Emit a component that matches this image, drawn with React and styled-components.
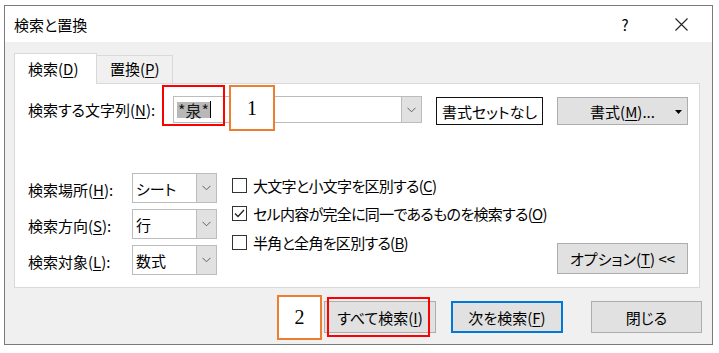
import React from 'react'
import styled, { createGlobalStyle } from 'styled-components'

const GlobalStyle = createGlobalStyle`
  html, body {
    margin: 0;
    padding: 0;
    background: #fff;
  }
  body {
    font-family: "Noto Sans CJK JP", "Noto Sans", sans-serif;
    font-size: 15px;
    color: #000;
    font-feature-settings: "palt";
  }
  * { box-sizing: border-box; }
  u { text-underline-offset: 2px; text-decoration-thickness: 1px; }
`

function Chevron() {
  return (
    <svg width="9" height="6" viewBox="0 0 9 6">
      <path d="M0.5 0.8 L4.5 4.8 L8.5 0.8" fill="none" stroke="#606060" strokeWidth="1" />
    </svg>
  )
}

function Combo({ children, width }) {
  return (
    <ComboBox $width={width}>
      <ComboText>{children}</ComboText>
      <ComboButton>
        <Chevron />
      </ComboButton>
    </ComboBox>
  )
}

function Check({ checked, children }) {
  return (
    <CheckRow>
      <CheckBox>
        {checked && (
          <svg width="13" height="13" viewBox="0 0 13 13">
            <path d="M2 6.5 L5 9.5 L11 3" fill="none" stroke="#222" strokeWidth="1.3" />
          </svg>
        )}
      </CheckBox>
      <span>{children}</span>
    </CheckRow>
  )
}

export default function App() {
  return (
    <Page>
      <GlobalStyle />
      <Dialog>
        <TitleBar>
          <Title>検索と置換</Title>
          <Caption>?</Caption>
          <Caption $close>
            <svg width="13" height="13" viewBox="0 0 13 13">
              <path d="M0.5 0.5 L12.5 12.5 M12.5 0.5 L0.5 12.5" stroke="#222" strokeWidth="1.1" />
            </svg>
          </Caption>
        </TitleBar>

        <Content>
          <Tabs>
            <Tab $active>検索(<u>D</u>)</Tab>
            <Tab>置換(<u>P</u>)</Tab>
          </Tabs>
          <Panel>
            <FindRow>
              <FindLabel>検索する文字列(<u>N</u>):</FindLabel>
              <ComboBox $width={249}>
                <ComboText>
                  <Selected>*泉*</Selected>
                  <Caret />
                </ComboText>
                <ComboButton>
                  <Chevron />
                </ComboButton>
              </ComboBox>
              <FormatNone>書式セットなし</FormatNone>
              <Button $width={131} $ml={14} $h={28}>
                書式(<u>M</u>)...
                <DropArrow width="7" height="4" viewBox="0 0 7 4">
                  <path d="M0 0 H7 L3.5 4 Z" fill="#000" />
                </DropArrow>
              </Button>
            </FindRow>

            <OptionsRow>
              <Fields>
                <FieldLabel>検索場所(<u>H</u>):</FieldLabel>
                <Combo>シート</Combo>
                <FieldLabel>検索方向(<u>S</u>):</FieldLabel>
                <Combo>行</Combo>
                <FieldLabel>検索対象(<u>L</u>):</FieldLabel>
                <Combo>数式</Combo>
              </Fields>
              <Checks>
                <Check>大文字と小文字を区別する(<u>C</u>)</Check>
                <Check checked>セル内容が完全に同一であるものを検索する(<u>O</u>)</Check>
                <Check>半角と全角を区別する(<u>B</u>)</Check>
              </Checks>
              <OptionButton>オプション(<u>T</u>) &lt;&lt;</OptionButton>
            </OptionsRow>
          </Panel>
        </Content>

        <Footer>
          <Button $width={112} $h={32}>すべて検索(<u>I</u>)</Button>
          <Button $width={112} $h={32} $ml={15} $focus>次を検索(<u>F</u>)</Button>
          <Button $width={111} $h={32} $ml={28}>閉じる</Button>
        </Footer>
      </Dialog>

      <RedMark $x={162} $y={85} $w={63} $h={41} />
      <NumberMark $x={229} $y={85} $w={46} $h={46}>1</NumberMark>
      <NumberMark $x={277} $y={295} $w={45} $h={45}>2</NumberMark>
      <RedMark $x={327} $y={297} $w={103} $h={40} />
    </Page>
  )
}

const Page = styled.div`
  position: relative;
  width: 719px;
  height: 353px;
  padding: 5px 0 0 4px;
`

const Dialog = styled.div`
  width: 709px;
  height: 340px;
  border: 1px solid #7a7a7a;
  background: #f0f0f0;
  display: flex;
  flex-direction: column;
`

const TitleBar = styled.div`
  height: 36px;
  background: #fff;
  display: flex;
  align-items: center;
  padding: 0 16px 0 9px;
`

const Title = styled.div`
  flex: 1;
  line-height: 1;
`

const Caption = styled.div`
  width: 30px;
  display: flex;
  justify-content: center;
  align-items: center;
  margin-left: ${(p) => (p.$close ? '26px' : '0')};
  font-size: 15px;
`

const Content = styled.div`
  padding: 11px 12px 0 9px;
`

const Tabs = styled.div`
  display: flex;
  align-items: flex-end;
  height: 30px;
`

const Tab = styled.div`
  height: ${(p) => (p.$active ? '31px' : '28px')};
  width: ${(p) => (p.$active ? '83px' : '76px')};
  padding: ${(p) => (p.$active ? '3px' : '1px')} 0 0 13px;
  background: ${(p) => (p.$active ? '#fff' : '#f0f0f0')};
  border: 1px solid #d9d9d9;
  border-bottom: none;
  border-left: ${(p) => (p.$active ? '1px solid #d9d9d9' : 'none')};
  margin-bottom: ${(p) => (p.$active ? '-1px' : '0')};
  position: relative;
  z-index: 1;
  line-height: 24px;
`

const Panel = styled.div`
  height: 205px;
  background: #fff;
  border: 1px solid #d9d9d9;
  padding: 12px 11px 12px 13px;
  display: flex;
  flex-direction: column;
  justify-content: space-between;
`

const FindRow = styled.div`
  display: flex;
  align-items: flex-start;
`

const FindLabel = styled.div`
  width: 145px;
  line-height: 27px;
`

const ComboBox = styled.div`
  width: ${(p) => p.$width || 85}px;
  height: ${(p) => (p.$width ? 27 : 30)}px;
  border: 1px solid #bcbcbc;
  background: #fff;
  display: flex;
  flex-shrink: 0;
`

const ComboText = styled.div`
  flex: 1;
  display: flex;
  align-items: center;
  padding-left: 3px;
`

const ComboButton = styled.div`
  width: 20px;
  background: #e1e1e1;
  border-left: 1px solid #bcbcbc;
  display: flex;
  align-items: center;
  justify-content: center;
`

const Selected = styled.span`
  background: #b8b8b8;
  line-height: 16px;
  padding: 0 1px;
  color: #1a1a1a;
  font-size: 16px;
`

const Caret = styled.span`
  width: 1px;
  height: 17px;
  background: #000;
`

const FormatNone = styled.div`
  width: 107px;
  height: 28px;
  margin: 1px 0 0 14px;
  border: 1px solid #111;
  background: #fff;
  display: flex;
  align-items: center;
  justify-content: center;
  flex-shrink: 0;
`

const Button = styled.div`
  position: relative;
  width: ${(p) => p.$width}px;
  height: ${(p) => p.$h}px;
  margin-left: ${(p) => p.$ml || 0}px;
  margin-top: ${(p) => (p.$h === 28 ? 1 : 0)}px;
  background: #e1e1e1;
  border: ${(p) => (p.$focus ? '2px solid #0078d7' : '1px solid #adadad')};
  display: flex;
  align-items: center;
  justify-content: center;
  flex-shrink: 0;
`

const DropArrow = styled.svg`
  position: absolute;
  right: 5px;
  top: 12px;
`

const OptionsRow = styled.div`
  display: flex;
  align-items: flex-start;
`

const Fields = styled.div`
  display: grid;
  grid-template-columns: 104px 85px;
  grid-auto-rows: 30px;
  row-gap: 6px;
  flex-shrink: 0;
`

const FieldLabel = styled.div`
  display: flex;
  align-items: center;
  padding-top: 2px;
`

const Checks = styled.div`
  margin: -2px 0 0 15px;
  display: flex;
  flex-direction: column;
  flex: 1;
  min-width: 0;
  white-space: nowrap;
  letter-spacing: -0.7px;
`

const CheckRow = styled.div`
  height: 28.5px;
  display: flex;
  align-items: center;
  gap: 6px;
`

const CheckBox = styled.div`
  width: 15px;
  height: 15px;
  border: 1px solid #333;
  display: flex;
  align-items: center;
  justify-content: center;
`

const OptionButton = styled.div`
  align-self: flex-end;
  margin-bottom: 1px;
  width: 131px;
  height: 31px;
  background: #e1e1e1;
  border: 1px solid #adadad;
  display: flex;
  align-items: center;
  justify-content: center;
  flex-shrink: 0;
`

const Footer = styled.div`
  display: flex;
  justify-content: flex-end;
  padding: 13px 10px 11px 0;
`

const RedMark = styled.div`
  position: absolute;
  left: ${(p) => p.$x}px;
  top: ${(p) => p.$y}px;
  width: ${(p) => p.$w}px;
  height: ${(p) => p.$h}px;
  border: 2px solid #ff0000;
`

const NumberMark = styled.div`
  position: absolute;
  left: ${(p) => p.$x}px;
  top: ${(p) => p.$y}px;
  width: ${(p) => p.$w}px;
  height: ${(p) => p.$h}px;
  border: 2px solid #ed7d31;
  background: #fff;
  display: flex;
  align-items: center;
  justify-content: center;
  font-family: "Liberation Serif", serif;
  font-size: 20px;
`
